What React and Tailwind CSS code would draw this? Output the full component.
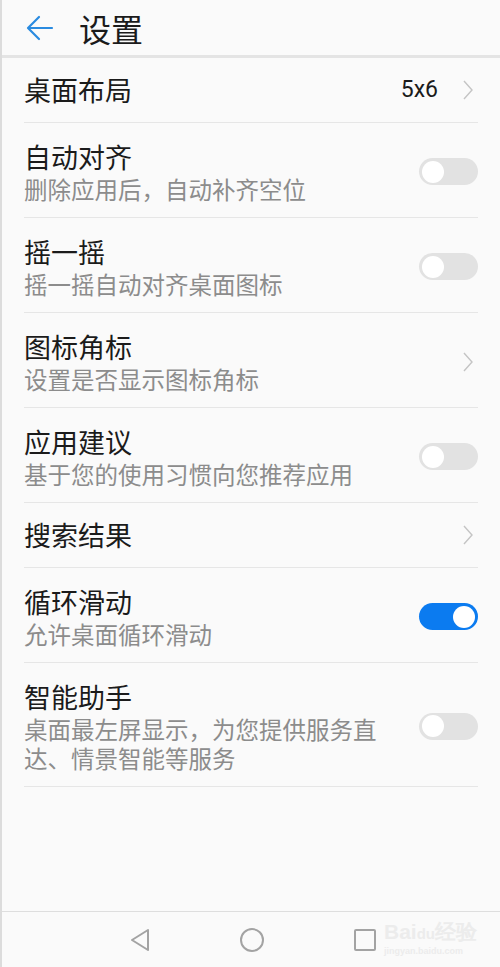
import React from "react";

const rows = [
  { title: "桌面布局", value: "5x6", kind: "link" },
  { title: "自动对齐", sub: "删除应用后，自动补齐空位", kind: "switch" },
  { title: "摇一摇", sub: "摇一摇自动对齐桌面图标", kind: "switch" },
  { title: "图标角标", sub: "设置是否显示图标角标", kind: "link" },
  { title: "应用建议", sub: "基于您的使用习惯向您推荐应用", kind: "switch" },
  { title: "搜索结果", kind: "link" },
  { title: "循环滑动", sub: "允许桌面循环滑动", kind: "switch", on: true },
  {
    title: "智能助手",
    sub: "桌面最左屏显示，为您提供服务直达、情景智能等服务",
    kind: "switch",
  },
];

function Toggle({ on }) {
  return (
    <div
      className={
        on
          ? "w-[59px] h-[27px] rounded-full bg-[#0b7bf0] flex items-center justify-end px-[3px] shrink-0"
          : "w-[59px] h-[27px] rounded-full bg-[#e2e2e2] flex items-center justify-start px-[3px] shrink-0"
      }
    >
      <div className="w-[22px] h-[22px] rounded-full bg-white" />
    </div>
  );
}

function Chevron() {
  return (
    <svg width="12" height="20" viewBox="0 0 12 20" className="shrink-0">
      <path d="M2 1 L10 10 L2 19" fill="none" stroke="#c4c4c4" strokeWidth="1.4" />
    </svg>
  );
}

function Row({ row }) {
  // single line rows are shorter
  const single = !row.sub;
  return (
    <div
      className={
        single
          ? "mx-[22px] h-[65px] border-b border-[#e6e6e6] flex items-center"
          : "mx-[22px] pt-[16px] pb-[13px] border-b border-[#e6e6e6] flex items-center"
      }
    >
      <div className="flex-1 min-w-0 pr-[30px]">
        <div className="text-[27px] leading-[36px] text-[#1b1b1b]">{row.title}</div>
        {row.sub && (
          <div className="text-[23.5px] leading-[29px] text-[#8c8c8c]">{row.sub}</div>
        )}
      </div>
      {row.kind === "switch" ? (
        <Toggle on={row.on} />
      ) : (
        <div className="flex items-center gap-[24px] pr-[4px]">
          {row.value && (
            <span className="text-[23px] text-[#1b1b1b]" style={{ fontFamily: "Roboto, sans-serif" }}>
              {row.value}
            </span>
          )}
          <Chevron />
        </div>
      )}
    </div>
  );
}

export default function App() {
  return (
    <div
      className="w-[500px] h-[967px] bg-[#fafafa] flex flex-col border-l-2 border-[#dcdcdc] overflow-hidden"
      style={{ fontFamily: '"Noto Sans CJK SC", "Noto Sans", sans-serif' }}
    >
      {/* header */}
      <div className="h-[55px] flex items-center shrink-0">
        <svg width="28" height="26" viewBox="0 0 28 26" className="ml-[24px]">
          <path
            d="M26 13 H3 M13 2 L2 13 L13 24"
            fill="none"
            stroke="#2a8be0"
            strokeWidth="2.2"
            strokeLinecap="round"
            strokeLinejoin="round"
          />
        </svg>
        <span className="ml-[25px] text-[32px] leading-none text-[#1b1b1b]">设置</span>
      </div>
      <div className="h-[3px] bg-[#e4e4e4] shrink-0" />

      <div className="flex-1">
        {rows.map((r) => (
          <Row key={r.title} row={r} />
        ))}
      </div>

      {/* nav bar */}
      <div className="h-[56px] border-t border-[#dedede] flex items-center shrink-0 relative">
        <div className="flex items-center w-full">
          <svg width="24" height="26" viewBox="0 0 24 26" className="ml-[126px]">
            <path d="M20 3 L4 13 L20 23 Z" fill="none" stroke="#a3a3a3" strokeWidth="2" strokeLinejoin="round" />
          </svg>
          <svg width="26" height="26" viewBox="0 0 26 26" className="ml-[87px]">
            <circle cx="13" cy="13" r="11" fill="none" stroke="#a3a3a3" strokeWidth="2" />
          </svg>
          <svg width="22" height="22" viewBox="0 0 22 22" className="ml-[89px]">
            <rect x="1" y="1" width="20" height="20" rx="1" fill="none" stroke="#a3a3a3" strokeWidth="2" />
          </svg>
        </div>
        {/* watermark */}
        <div className="absolute left-[382px] top-[8px] flex flex-col items-start text-[#ececec]">
          <span className="text-[21px] leading-[24px] font-bold" style={{ fontFamily: "Arial, sans-serif" }}>
            Bai<span className="text-[15px]">du</span>经验
          </span>
          <span className="text-[9px] leading-[11px] font-bold" style={{ fontFamily: "Arial, sans-serif" }}>
            jingyan.baidu.com
          </span>
        </div>
      </div>
    </div>
  );
}
